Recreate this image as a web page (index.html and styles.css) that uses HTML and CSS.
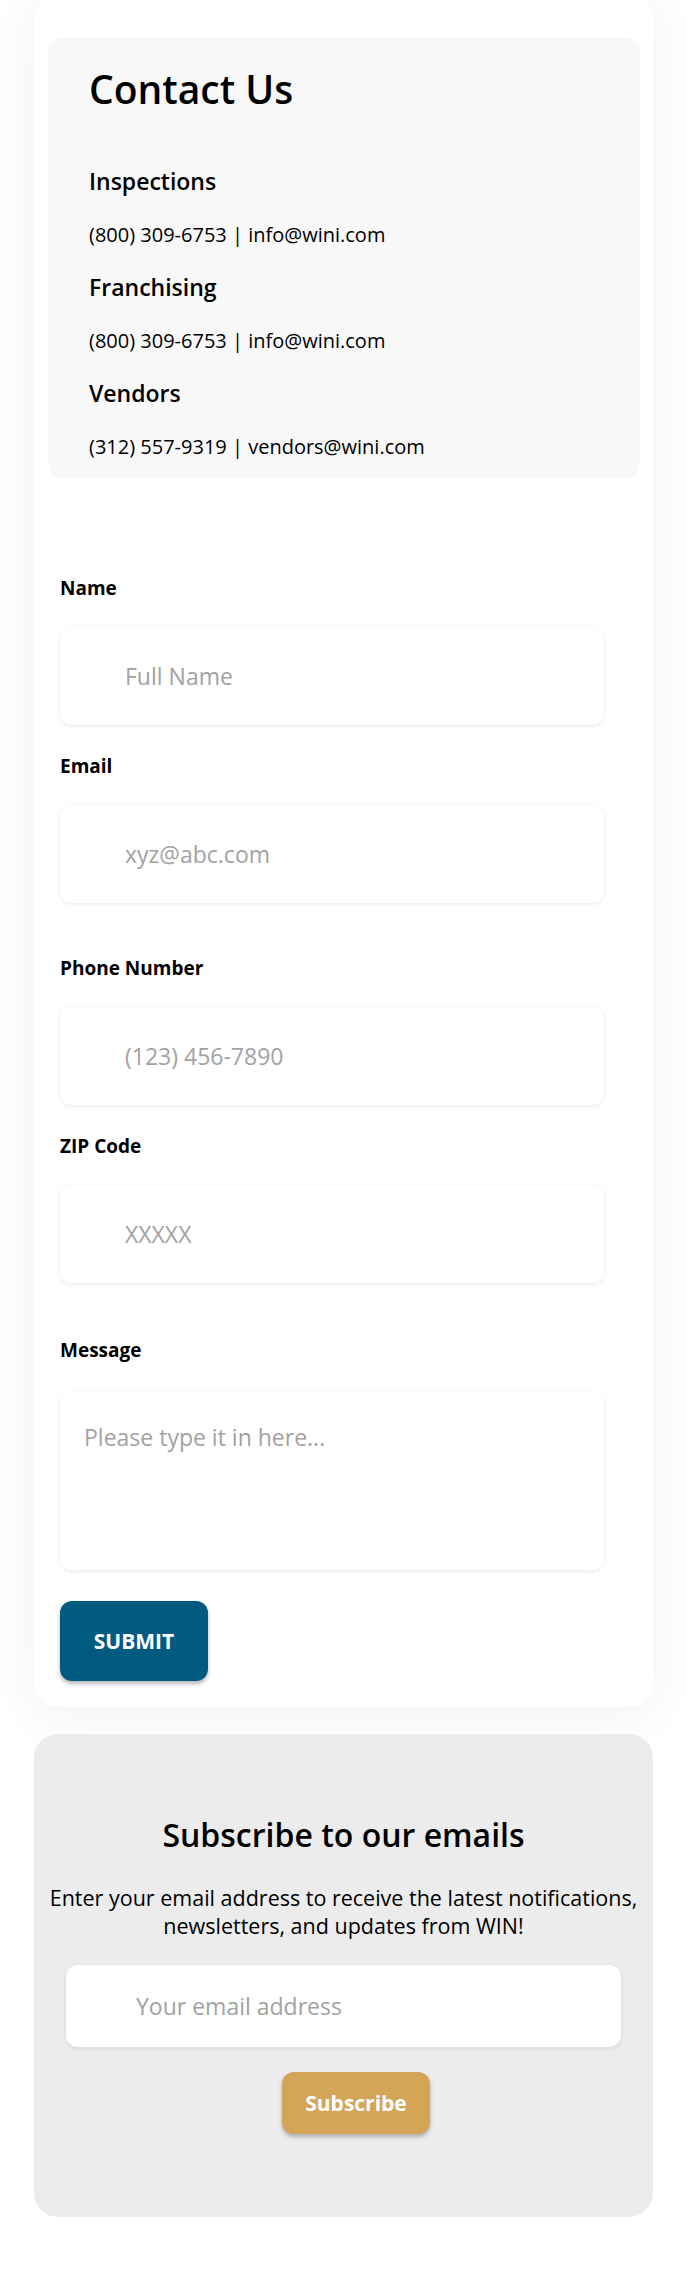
FILE: index.html
```
<!DOCTYPE html>
<html lang="en">
<head>
<meta charset="utf-8">
<title>Contact Us</title>
<link rel="stylesheet" href="styles.css">
</head>
<body>
<main class="page">
  <section class="card">
    <div class="info">
      <h1 class="info-title">Contact Us</h1>
      <h2 class="info-head">Inspections</h2>
      <p class="info-line">(800) 309-6753 | info@wini.com</p>
      <h2 class="info-head">Franchising</h2>
      <p class="info-line">(800) 309-6753 | info@wini.com</p>
      <h2 class="info-head">Vendors</h2>
      <p class="info-line info-last">(312) 557-9319 | vendors@wini.com</p>
    </div>
    <form class="form">
      <div class="group">
        <div class="field">
          <label class="label" for="name">Name</label>
          <input class="input" id="name" type="text" placeholder="Full Name">
        </div>
        <div class="field">
          <label class="label" for="email">Email</label>
          <input class="input" id="email" type="email" placeholder="xyz@abc.com">
        </div>
      </div>
      <div class="group">
        <div class="field">
          <label class="label" for="phone">Phone Number</label>
          <input class="input" id="phone" type="tel" placeholder="(123) 456-7890">
        </div>
        <div class="field">
          <label class="label" for="zip">ZIP Code</label>
          <input class="input" id="zip" type="text" placeholder="XXXXX">
        </div>
      </div>
      <div class="field field-message">
        <label class="label label-message" for="msg">Message</label>
        <textarea class="textarea" id="msg" placeholder="Please type it in here..."></textarea>
      </div>
      <button class="submit" type="button">SUBMIT</button>
    </form>
  </section>
  <section class="subscribe">
    <h2 class="sub-title">Subscribe to our emails</h2>
    <p class="sub-text">Enter your email address to receive the latest notifications, newsletters, and updates from WIN!</p>
    <input class="sub-input" type="email" placeholder="Your email address">
    <button class="sub-btn" type="button">Subscribe</button>
  </section>
</main>
</body>
</html>
```
FILE: styles.css
```
* { box-sizing: border-box; }

body {
  margin: 0;
  background: #ffffff;
  font-family: "Open Sans", "Noto Sans", sans-serif;
  color: #000000;
}

.page {
  display: flex;
  flex-direction: column;
  gap: 27px;
  margin-top: -6px;
  padding: 0 34px 64px;
}

.card {
  background: #ffffff;
  border-radius: 24px;
  padding: 43px 13px 26px 14px;
  box-shadow: 0 6px 50px rgba(40, 40, 110, 0.07);
}

.info {
  background: #f8f8f9;
  border-radius: 16px;
  padding: 28px 41px 16px;
}

.info-title {
  margin: 0 0 54px;
  font-size: 39px;
  line-height: 48px;
  font-weight: 600;
}

.info-head {
  margin: 0 0 24px;
  font-size: 23px;
  line-height: 29px;
  font-weight: 600;
}

.info-line {
  margin: 0 0 23px;
  font-size: 20px;
  line-height: 30px;
}

.info-last { margin-bottom: 0; }

.form {
  margin-top: 97px;
  padding: 0 12px;
  display: flex;
  flex-direction: column;
}

.group {
  display: flex;
  flex-direction: column;
  gap: 28px;
  margin-bottom: 52px;
}

.group + .group { margin-bottom: 54px; }

.field {
  display: flex;
  flex-direction: column;
}

.label {
  display: block;
  margin-bottom: 25px;
  font-size: 19px;
  line-height: 27px;
  font-weight: 700;
}

.label-message { margin-bottom: 28px; }

.input,
.textarea,
.sub-input {
  display: block;
  border: none;
  outline: none;
  background: #ffffff;
  border-radius: 12px;
  font-family: "Open Sans", "Noto Sans", sans-serif;
  font-size: 23px;
  color: #000;
  box-shadow: 0 1px 5px rgba(0, 0, 0, 0.09);
}

.input {
  width: 544px;
  height: 98px;
  padding: 0 0 0 65px;
}

.textarea {
  width: 544px;
  height: 178px;
  padding: 28px 24px;
  line-height: 34px;
  resize: none;
}

.input::placeholder,
.textarea::placeholder,
.sub-input::placeholder {
  color: #a2a2a2;
}

.submit {
  margin-top: 31px;
  width: 148px;
  height: 80px;
  border: none;
  border-radius: 12px;
  background: #015a80;
  color: #ffffff;
  font-family: "Open Sans", "Noto Sans", sans-serif;
  font-size: 21px;
  font-weight: 700;
  box-shadow: 0 3px 4px rgba(0, 0, 0, 0.28);
}

.subscribe {
  background: #ececec;
  border-radius: 24px;
  padding: 82px 8px 83px;
  text-align: center;
}

.sub-title {
  margin: 0 0 30px;
  font-size: 32px;
  line-height: 38px;
  font-weight: 600;
}

.sub-text {
  margin: 0 0 25px;
  font-size: 21.5px;
  line-height: 28px;
}

.sub-input {
  width: 555px;
  height: 82px;
  margin: 0 auto;
  padding: 0 0 0 70px;
  box-shadow: 0 2px 5px rgba(0, 0, 0, 0.08);
}

.sub-btn {
  display: block;
  margin: 25px 0 0 240px;
  width: 148px;
  height: 62px;
  border: none;
  border-radius: 12px;
  background: #d4a557;
  color: #ffffff;
  font-family: "Open Sans", "Noto Sans", sans-serif;
  font-size: 21px;
  font-weight: 700;
  box-shadow: 0 3px 4px rgba(0, 0, 0, 0.25);
}
```
